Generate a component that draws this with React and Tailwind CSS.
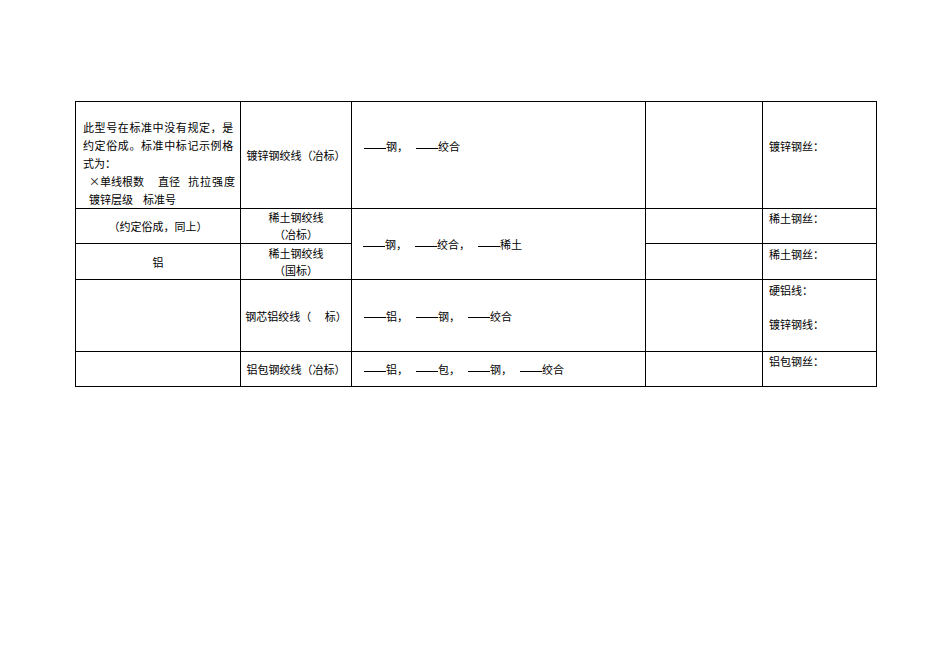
const font = { fontFamily: '"Noto Sans CJK SC", "Liberation Serif", serif' };

const Dash = ({ children, last }) => (
  <span className={last ? "" : "mr-[8px]"}>
    <span className="inline-block w-[22px] h-px bg-black align-middle"></span>
    {children}
  </span>
);

const App = () => {
  return (
    <div className="w-[950px] min-h-[672px] bg-white text-black" style={font}>
      <div className="pt-[101px] pl-[75px]">
        <table className="table-fixed border-collapse text-[11px] leading-[18px] w-[801px]">
          <colgroup>
            <col className="w-[165px]" />
            <col className="w-[111px]" />
            <col className="w-[294px]" />
            <col className="w-[117px]" />
            <col className="w-[114px]" />
          </colgroup>
          <tbody>
            {/* row 1 */}
            <tr className="h-[106px]">
              <td className="border border-black align-top pt-[16px] pl-[7px] pr-[4px]">
                <div className="tracking-[0.6px]">此型号在标准中没有规定，是</div>
                <div className="tracking-[0.6px]">约定俗成。标准中标记示例格</div>
                <div>式为：</div>
                <div className="pl-[6px] flex">
                  <span>×单线根数</span>
                  <span className="ml-[14px]">直径</span>
                  <span className="ml-[8px] tracking-[1px]">抗拉强度</span>
                </div>
                <div className="pl-[6px] flex">
                  <span>镀锌层级</span>
                  <span className="ml-[10px]">标准号</span>
                </div>
              </td>
              <td className="border border-black align-middle text-center">镀锌钢绞线（冶标）</td>
              <td className="border border-black align-top pt-[35px] pl-[12px]">
                <Dash>钢，</Dash>
                <Dash last>绞合</Dash>
              </td>
              <td className="border border-black"></td>
              <td className="border border-black align-top pt-[35px] pl-[6px]">镀锌钢丝：</td>
            </tr>

            {/* row 2 */}
            <tr className="h-[35px]">
              <td className="border border-black align-middle text-center">（约定俗成，同上）</td>
              <td className="border border-black align-middle text-center leading-[17px]">
                <div>稀土钢绞线</div>
                <div>（冶标）</div>
              </td>
              <td rowSpan={2} className="border border-black align-middle pl-[11px]">
                <Dash>钢，</Dash>
                <Dash>绞合，</Dash>
                <Dash last>稀土</Dash>
              </td>
              <td className="border border-black"></td>
              <td className="border border-black align-top pt-0 pl-[6px]">稀土钢丝：</td>
            </tr>

            {/* row 3 */}
            <tr className="h-[36px]">
              <td className="border border-black align-middle text-center">铝</td>
              <td className="border border-black align-middle text-center leading-[17px]">
                <div>稀土钢绞线</div>
                <div>（国标）</div>
              </td>
              <td className="border border-black"></td>
              <td className="border border-black align-top pt-[1px] pl-[6px]">稀土钢丝：</td>
            </tr>

            {/* row 4 */}
            <tr className="h-[72px]">
              <td className="border border-black"></td>
              <td className="border border-black align-middle text-center">钢芯铝绞线（&#12288;&nbsp;标）</td>
              <td className="border border-black align-middle pl-[12px]">
                <Dash>铝，</Dash>
                <Dash>钢，</Dash>
                <Dash last>绞合</Dash>
              </td>
              <td className="border border-black"></td>
              <td className="border border-black align-top pt-[1px] pl-[6px]">
                <div>硬铝线：</div>
                <div className="mt-[16px]">镀锌钢线：</div>
              </td>
            </tr>

            {/* row 5 */}
            <tr className="h-[35px]">
              <td className="border border-black"></td>
              <td className="border border-black align-middle text-center">铝包钢绞线（冶标）</td>
              <td className="border border-black align-middle pl-[12px]">
                <Dash>铝，</Dash>
                <Dash>包，</Dash>
                <Dash>钢，</Dash>
                <Dash last>绞合</Dash>
              </td>
              <td className="border border-black"></td>
              <td className="border border-black align-top pt-0 pl-[6px]">铝包钢丝：</td>
            </tr>
          </tbody>
        </table>
      </div>
    </div>
  );
};

export default App;
